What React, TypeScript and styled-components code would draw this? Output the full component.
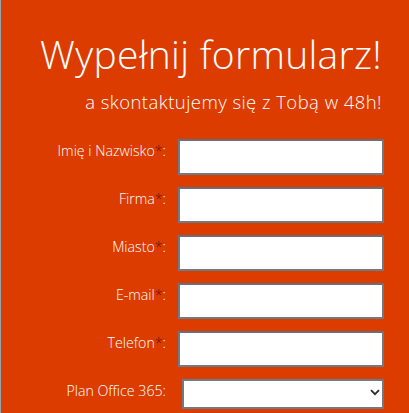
import React from 'react';
import styled, { createGlobalStyle } from 'styled-components';

const GlobalStyle = createGlobalStyle`
  html, body {
    margin: 0;
    padding: 0;
    background: #dc3c00;
  }
`;

const Page = styled.div`
  box-sizing: border-box;
  width: 409px;
  height: 413px;
  overflow: hidden;
  background: #dc3c00;
  border-left: 1px solid #9aa3ab;
  padding: 30px 25px 0 0;
  font-family: 'Open Sans', 'Liberation Sans', sans-serif;
  color: #fff;
`;

const Title = styled.h1`
  margin: 0;
  text-align: right;
  font-size: 39px;
  font-weight: 300;
  line-height: 48px;
  letter-spacing: 0.3px;
  padding-right: 2px;
`;

const Subtitle = styled.h2`
  margin: 12px 0 0;
  text-align: right;
  font-size: 18.5px;
  font-weight: 300;
  line-height: 24px;
  letter-spacing: 0.45px;
  padding-right: 2px;
`;

const Form = styled.form`
  display: grid;
  grid-template-columns: 1fr 206px;
  column-gap: 12px;
  row-gap: 12px;
  margin-top: 25px;
`;

const Label = styled.label`
  text-align: right;
  font-size: 14.2px;
  font-weight: 300;
  line-height: 20px;
  padding-top: 2px;
`;

const Req = styled.span`
  color: #5e1600;
`;

const TextInput = styled.input`
  box-sizing: border-box;
  height: 36px;
  width: 206px;
  margin: 0;
  border: 2px solid #6f7b84;
  border-top-color: #6a6f73;
  background: #fff;
  outline: none;
  padding: 0 6px;
`;

const SelectWrap = styled.div`
  position: relative;
  padding-left: 4px;
`;

const Select = styled.select`
  box-sizing: border-box;
  appearance: none;
  width: 202px;
  height: 30px;
  margin: 0;
  border: 2px solid #6f7b84;
  background: #fff;
  outline: none;
`;

const Chevron = styled.svg`
  position: absolute;
  right: 4px;
  top: 10px;
  pointer-events: none;
`;

const fields = ['Imię i Nazwisko', 'Firma', 'Miasto', 'E-mail', 'Telefon'];

export default function App() {
  return (
    <>
      <GlobalStyle />
      <Page>
        <Title>Wypełnij formularz!</Title>
        <Subtitle>a skontaktujemy się z Tobą w 48h!</Subtitle>
        <Form>
          {fields.map(f => (
            <React.Fragment key={f}>
              <Label>
                {f}
                <Req>*</Req>:
              </Label>
              <TextInput type="text" />
            </React.Fragment>
          ))}
          <Label>Plan Office 365:</Label>
          <SelectWrap>
            <Select>
              <option></option>
            </Select>
            <Chevron width="10" height="7" viewBox="0 0 10 7">
              <path d="M1 1.2 L5 5.2 L9 1.2" fill="none" stroke="#2b2b2b" strokeWidth="1.8" />
            </Chevron>
          </SelectWrap>
        </Form>
      </Page>
    </>
  );
}
